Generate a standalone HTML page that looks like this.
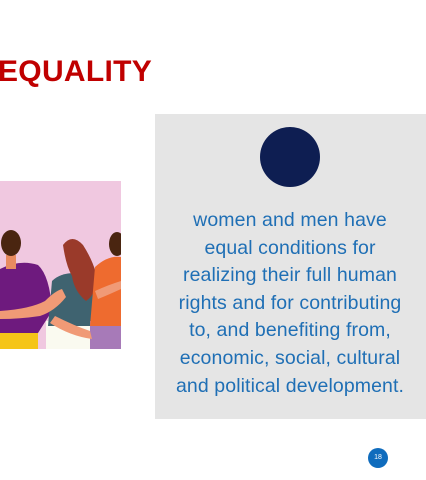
<!DOCTYPE html>
<html><head><style>
body{margin:0;width:426px;height:480px;background:#fff;position:relative;overflow:hidden;font-family:"Liberation Sans",sans-serif}
.t{position:absolute;left:-2px;top:55px;font-size:30px;font-weight:bold;color:#c00000;letter-spacing:0.3px}
.box{position:absolute;left:155px;top:114px;width:271px;height:305px;background:#e5e5e5}
.c{position:absolute;left:260px;top:127px;width:60px;height:60px;border-radius:50%;background:#0e1e52}
.tx{position:absolute;left:150px;width:280px;top:207px;text-align:center;color:#1f6fb5;font-size:19.5px;line-height:27.6px;letter-spacing:0.1px}
.pg{position:absolute;left:368px;top:448px;width:20px;height:20px;border-radius:50%;background:#0f6cbd;color:#fff;font-size:7px;text-align:center;line-height:20px}
</style></head><body>
<div class="t">EQUALITY</div>
<svg style="position:absolute;left:0;top:181px" width="121" height="168" viewBox="0 0 121 168">
<rect width="121" height="168" fill="#f0c8e0"/>
<rect x="0" y="152" width="38" height="16" fill="#f5c518"/>
<path d="M0 88 Q20 78 38 84 Q50 95 52 130 L38 152 L0 152Z" fill="#6e1a7e"/>
<rect x="6" y="74" width="10" height="14" fill="#e88a60"/>
<ellipse cx="11" cy="62" rx="10" ry="13" fill="#4a2510"/>
<rect x="46" y="140" width="46" height="28" fill="#fafaf0"/>
<path d="M52 100 Q60 92 75 92 Q92 96 95 115 L92 145 L48 145Z" fill="#3f6370"/>
<path d="M63 64 Q72 52 83 64 Q92 78 96 92 Q98 112 86 120 Q74 110 72 95 Q66 85 63 64Z" fill="#9a3a2a"/>
<rect x="90" y="140" width="31" height="28" fill="#a77ab8"/>
<path d="M95 86 Q108 74 121 76 L121 145 L90 145Z" fill="#ee6b2f"/>
<ellipse cx="117" cy="63" rx="8" ry="12" fill="#4a2510"/>
<path d="M0 130 Q30 128 45 120 Q55 110 62 108 L66 116 Q55 130 40 135 Q20 138 0 138Z" fill="#f09a76"/>
<path d="M55 135 Q75 145 90 150 L92 158 Q70 155 50 142Z" fill="#f09a76"/>
<path d="M95 110 Q108 104 121 100 L121 108 Q108 114 98 118Z" fill="#f09a76"/>
</svg>
<div class="box"></div>
<div class="c"></div>
<div class="tx">women and men have<br>equal conditions for<br>realizing their full human<br>rights and for contributing<br>to, and benefiting from,<br>economic, social, cultural<br>and political development.</div>
<div class="pg">18</div>
</body></html>
